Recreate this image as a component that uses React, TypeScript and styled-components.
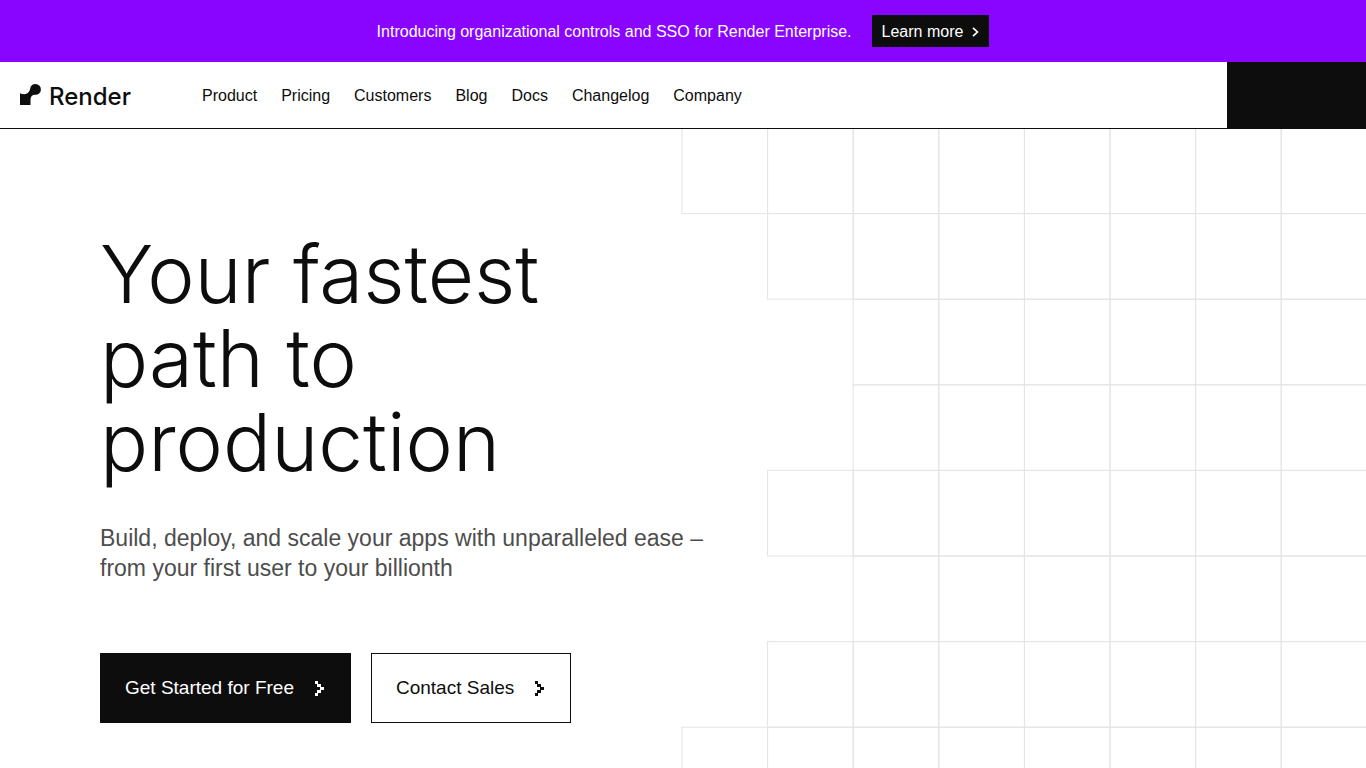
import React from "react";
import styled, { createGlobalStyle } from "styled-components";

const ink = "#0d0d0d";
const CELL = 85.6;

const GlobalStyle = createGlobalStyle`
  *, *::before, *::after { box-sizing: border-box; }
  body {
    margin: 0;
    background: #fff;
    color: ${ink};
    font-family: "Liberation Sans", Arial, sans-serif;
    font-size: 16px;
    line-height: 24px;
  }
  a { color: inherit; text-decoration: none; }
`;

const Page = styled.div`
  display: flex;
  flex-direction: column;
  min-height: 100vh;
`;

const Banner = styled.aside`
  display: flex;
  align-items: center;
  justify-content: center;
  gap: 20px;
  min-height: 62px;
  padding: 8px 20px;
  background: #8a05ff;
  color: #fff;
`;

const BannerText = styled.p`
  margin: 0;
  padding-top: 2px;
`;

const BannerLink = styled.a`
  display: flex;
  align-items: center;
  gap: 9px;
  height: 32px;
  padding: 2px 10px 0;
  background: ${ink};
  white-space: nowrap;
`;

const Header = styled.header`
  display: flex;
  align-items: stretch;
  min-height: 67px;
  border-bottom: 1px solid ${ink};
`;

const Logo = styled.a`
  display: flex;
  flex-wrap: wrap;
  align-content: center;
  align-items: baseline;
  gap: 8px;
  width: 190px;
  padding: 2px 0 0 20px;
  font-family: Inter, sans-serif;
  font-size: 24px;
  font-weight: 500;
`;

const Nav = styled.nav`
  display: flex;
  flex: 1;
  align-items: center;
  padding-top: 2px;
`;

const NavLink = styled.a`
  padding: 12px;
`;

const HeaderAction = styled.a`
  width: 139px;
  background: ${ink};
`;

const Hero = styled.main`
  display: grid;
  flex: 1;
  grid-template-columns: 1fr 1fr;
  overflow: hidden;
`;

const Lattice = styled.svg`
  grid-area: 1 / 2;
  width: 100%;
  height: 100%;
  contain: size;
  overflow: visible;
`;

const Copy = styled.div`
  grid-area: 1 / 1 / 2 / 3;
  z-index: 1;
  max-width: 740px;
  padding: 103px 0 44px 100px;
`;

const Title = styled.h1`
  max-width: 500px;
  margin: 0;
  font-family: Inter, sans-serif;
  font-size: 80px;
  font-weight: 350;
  line-height: 84px;
`;

const Lead = styled.p`
  margin: 39px 0 0;
  color: #4d4d4d;
  font-size: 23px;
  line-height: 30px;
`;

const Actions = styled.div`
  display: flex;
  gap: 20px;
  margin-top: 70px;
`;

const Action = styled.a<{ $solid?: boolean }>`
  display: flex;
  align-items: center;
  gap: 19px;
  height: 70px;
  padding: 0 24px;
  border: 1px solid ${ink};
  background: ${(p) => (p.$solid ? ink : "#fff")};
  color: ${(p) => (p.$solid ? "#fff" : ink)};
  font-size: 19px;
  white-space: nowrap;
`;

const navItems = ["Product", "Pricing", "Customers", "Blog", "Docs", "Changelog", "Company"];

// First filled column of each row in the background lattice.
const rowStarts = [0, 1, 2, 2, 1, 2, 1, 0, 0, 1, 1, 2];
const columns = Array.from({ length: 24 }, (_, i) => i);

const LogoMark = () => (
  <svg width="21" height="21" viewBox="0 0 21 21" fill={ink} aria-hidden="true">
    <path d="M15.5 0a5.400 5.400 0 0 0-5.300 4.600C9.700 8 7.500 10.200 4.200 10.200 2.600 10.200 1.200 9.900 0 9.200V21h10.500v-5.500c0-2.700 1.800-4.700 4.500-4.700h.5a5.400 5.400 0 0 0 0-10.800z" />
  </svg>
);

const Chevron = () => (
  <svg width="7" height="10" viewBox="0 0 7 10" fill="none" stroke="currentColor" strokeWidth="1.7" aria-hidden="true">
    <path d="M1 .8 5.400 5 1 9.200" />
  </svg>
);

const PixelArrow = () => (
  <svg width="13" height="15" viewBox="0 0 13 15" fill="currentColor" aria-hidden="true">
    <path d="M2 0h3v3H2zM4 3h4v3H4zM7 6h4v3H7zM4 9h4v3H4zM2 12h3v3H2z" />
  </svg>
);

export default function App() {
  return (
    <Page>
      <GlobalStyle />
      <Banner>
        <BannerText>Introducing organizational controls and SSO for Render Enterprise.</BannerText>
        <BannerLink href="#enterprise">
          Learn more
          <Chevron />
        </BannerLink>
      </Banner>
      <Header>
        <Logo href="#home">
          <LogoMark />
          Render
        </Logo>
        <Nav>
          {navItems.map((item) => (
            <NavLink key={item} href={`#${item.toLowerCase()}`}>{item}</NavLink>
          ))}
        </Nav>
        <HeaderAction href="#get-started" aria-label="Get Started" />
      </Header>
      <Hero>
        <Lattice aria-hidden="true" fill="none" stroke="#e4e4e4">
          {rowStarts.map((start, row) =>
            columns.slice(start).map((col) => (
              <rect key={`${row}-${col}`} x={-1 + col * CELL} y={-1 + row * CELL} width={CELL} height={CELL} />
            ))
          )}
        </Lattice>
        <Copy>
          <Title>Your fastest path to production</Title>
          <Lead>Build, deploy, and scale your apps with unparalleled ease – from your first user to your billionth</Lead>
          <Actions>
            <Action href="#start" $solid>
              Get Started for Free
              <PixelArrow />
            </Action>
            <Action href="#sales">
              Contact Sales
              <PixelArrow />
            </Action>
          </Actions>
        </Copy>
      </Hero>
    </Page>
  );
}
